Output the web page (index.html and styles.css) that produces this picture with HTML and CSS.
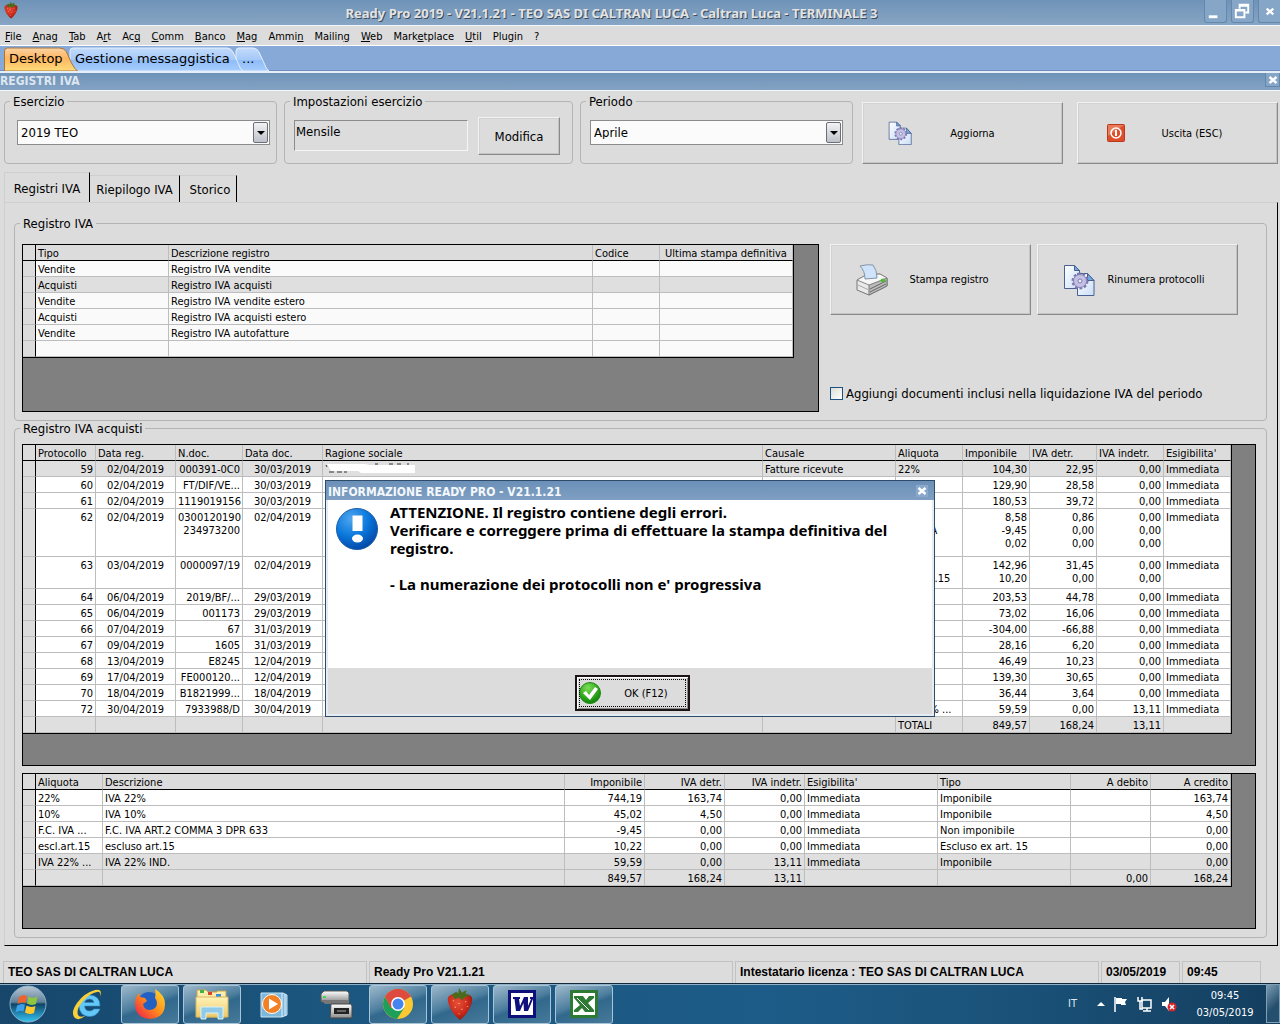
FILE: index.html
```html
<!DOCTYPE html>
<html lang="it">
<head>
<meta charset="utf-8">
<title>Ready Pro 2019 - Registri IVA</title>
<link rel="stylesheet" href="styles.css">
</head>
<body>
<svg class="defs" width="0" height="0" aria-hidden="true">
  <defs>
    <linearGradient id="paper" x1="0" y1="0" x2="1" y2="1"><stop offset="0" stop-color="#fff"/><stop offset="1" stop-color="#c9def6"/></linearGradient>
    <radialGradient id="berry" cx=".4" cy=".35" r=".7"><stop offset="0" stop-color="#e8503a"/><stop offset=".6" stop-color="#c92a1c"/><stop offset="1" stop-color="#8c160f"/></radialGradient>
    <radialGradient id="blueball" cx=".35" cy=".25" r=".85"><stop offset="0" stop-color="#4fa6ee"/><stop offset=".5" stop-color="#0a78dc"/><stop offset="1" stop-color="#023f9c"/></radialGradient>
    <radialGradient id="greenball" cx=".4" cy=".25" r=".8"><stop offset="0" stop-color="#7ddc5a"/><stop offset=".6" stop-color="#2fa81c"/><stop offset="1" stop-color="#0c7a08"/></radialGradient>
    <linearGradient id="orb" x1="0" y1="0" x2="0" y2="1"><stop offset="0" stop-color="#b9c9d6"/><stop offset=".45" stop-color="#5f8099"/><stop offset=".5" stop-color="#0f4468"/><stop offset="1" stop-color="#35c4f2"/></linearGradient>
    <linearGradient id="fox" x1="1" y1="0" x2="0" y2="1"><stop offset="0" stop-color="#ffe22e"/><stop offset=".5" stop-color="#ff8a1c"/><stop offset="1" stop-color="#ee1350"/></linearGradient>
    <linearGradient id="folder" x1="0" y1="0" x2="0" y2="1"><stop offset="0" stop-color="#fff3b8"/><stop offset="1" stop-color="#ecc96a"/></linearGradient>
    <linearGradient id="metal" x1="0" y1="0" x2="0" y2="1"><stop offset="0" stop-color="#fff"/><stop offset="1" stop-color="#8d8d8d"/></linearGradient>
  </defs>
  <symbol id="i-docs" viewBox="0 0 32 32">
    <path d="M1.500 1.500h10l5 5v18h-15z" fill="url(#paper)" stroke="#4a5f92"/>
    <path d="M11.500 1.500v5h5z" fill="#6fa8dc" stroke="#4a5f92"/>
    <path d="M14.500 9.500h10l6.500 7v15h-16.500z" fill="url(#paper)" stroke="#4a5f92"/>
    <path d="M24.500 9.500v7h6.500z" fill="#6fa8dc" stroke="#4a5f92"/>
    <circle cx="17" cy="17" r="7" fill="none" stroke="#7d78b0" stroke-width="3" stroke-dasharray="2.600 1.800"/>
    <circle cx="17" cy="17" r="6.500" fill="#c4c0e2" stroke="#8580b8"/>
    <circle cx="17" cy="17" r="2" fill="#eef" stroke="#7d78b0"/>
  </symbol>
  <symbol id="i-berry" viewBox="0 0 32 36">
    <path d="M16 35C9 30 3 20 3 13c0-5 5-6 13-6s13 1 13 6c0 7-6 17-13 22z" fill="url(#berry)"/>
    <path d="M7 8l5-3 2 2 1-6 3 5 5-3-1 4 5 2-6 2-3 3-3-3-4 2z" fill="#4c6a1c"/>
    <path d="M9 14v1M15 17v1M22 15v1M11 21v1M18 23v1M24 20v1M15 28v1" stroke="#ffb36b" stroke-width="1.500"/>
  </symbol>
  <symbol id="i-x" viewBox="0 0 10 10"><path d="M1.500 2l7 6M8.500 2l-7 6" stroke="#fff" stroke-width="2.400"/></symbol>
</svg>

<header class="titlebar">
  <svg class="app-icon" viewBox="0 0 32 36"><use href="#i-berry"/></svg>
  <h1>Ready Pro 2019 - V21.1.21 - TEO SAS DI CALTRAN LUCA - Caltran Luca - TERMINALE 3</h1>
  <div class="winbtns">
    <button type="button" aria-label="Riduci"><svg viewBox="0 0 22 22"><path d="M4 15h9v3H4z" fill="#fff"/></svg></button>
    <button type="button" aria-label="Ripristina"><svg viewBox="0 0 22 22"><path d="M8 8V4h9v8h-3M8 5h9" fill="none" stroke="#fff" stroke-width="2"/><path d="M4 9.500h9V17H4zM4 10h9" fill="none" stroke="#fff" stroke-width="2"/></svg></button>
    <button type="button" aria-label="Chiudi"><svg viewBox="0 0 22 22"><path d="M8 8l7 6M15 8l-7 6" stroke="#fff" stroke-width="2.400"/></svg></button>
  </div>
</header>

<nav class="menu">
  <a href="#"><u>F</u>ile</a><a href="#"><u>A</u>nag</a><a href="#"><u>T</u>ab</a><a href="#">A<u>r</u>t</a><a href="#">Ac<u>q</u></a><a href="#"><u>C</u>omm</a><a href="#"><u>B</u>anco</a><a href="#"><u>M</u>ag</a><a href="#">Ammi<u>n</u></a><a href="#">Mailin<u>g</u></a><a href="#"><u>W</u>eb</a><a href="#">Mark<u>e</u>tplace</a><a href="#"><u>U</u>til</a><a href="#">Plugin</a><a href="#">?</a>
</nav>

<nav class="doctabs">
  <svg class="tabshapes" width="280" height="24" aria-hidden="true">
    <defs>
      <linearGradient id="tb" x1="0" y1="0" x2="0" y2="1"><stop offset="0" stop-color="#c3dbfb"/><stop offset=".5" stop-color="#a5c9f8"/><stop offset=".55" stop-color="#8fbcf8"/><stop offset="1" stop-color="#a6cdfd"/></linearGradient>
      <linearGradient id="to" x1="0" y1="0" x2="0" y2="1"><stop offset="0" stop-color="#fbd3a4"/><stop offset=".45" stop-color="#fdb55f"/><stop offset="1" stop-color="#ffdc7a"/></linearGradient>
    </defs>
    <path d="M236 24V4q0-3 3-3h14q4 0 6 4l5 11q2 6 5 8z" fill="url(#tb)" stroke="#e4effc"/>
    <path d="M70 24V4q0-3 3-3h154q4 0 6 4l5 11q2 6 5 8z" fill="url(#tb)" stroke="#e4effc"/>
    <path d="M4.500 24V4q0-3 3-3h52q5 0 7 4l5 11q3 6 6 8z" fill="url(#to)" stroke="#a8763c"/>
  </svg>
  <a href="#" class="tab-a">Desktop</a><a href="#" class="tab-b">Gestione messaggistica</a><a href="#">...</a>
</nav>

<div class="section-title"><h2>REGISTRI IVA</h2><button type="button" aria-label="Chiudi scheda"><svg viewBox="0 0 10 10"><use href="#i-x"/></svg></button></div>

<main>
  <form class="toolbar">
    <fieldset class="group g-year">
      <legend>Esercizio</legend>
      <div class="combo"><select aria-label="Esercizio"><option>2019 TEO</option></select><span class="arrow"></span></div>
    </fieldset>
    <fieldset class="group g-settings">
      <legend>Impostazioni esercizio</legend>
      <div class="settings"><input type="text" value="Mensile" readonly aria-label="Impostazioni esercizio"><button type="button" class="btn">Modifica</button></div>
    </fieldset>
    <fieldset class="group g-period">
      <legend>Periodo</legend>
      <div class="combo"><select aria-label="Periodo"><option>Aprile</option></select><span class="arrow"></span></div>
    </fieldset>
    <button type="button" class="btn big refresh"><svg class="ico24" viewBox="0 0 32 32"><use href="#i-docs"/></svg><span>Aggiorna</span></button>
    <button type="button" class="btn big exit"><svg class="ico18" viewBox="0 0 18 18"><rect x=".5" y=".5" width="17" height="17" rx="1" fill="#dc4f2a" stroke="#b9391c"/><path d="M1 1h16L1 12z" fill="#f0997c" opacity=".6"/><circle cx="9" cy="9" r="5" fill="none" stroke="#fff" stroke-width="1.500"/><path d="M9 6v6" stroke="#fff" stroke-width="2"/></svg><span>Uscita (ESC)</span></button>
  </form>

  <div class="tabs" role="tablist">
    <button type="button" role="tab" aria-selected="true">Registri IVA</button><button type="button" role="tab">Riepilogo IVA</button><button type="button" role="tab">Storico</button>
  </div>

  <section class="panel">
    <fieldset class="group registers">
      <legend>Registro IVA</legend>
      <div class="reg-row">
        <div class="grid reg-grid">
          <table class="t-reg ruled">
            <colgroup><col class="w13"><col class="w133"><col><col class="w67"><col class="w133"></colgroup>
            <thead><tr><th></th><th>Tipo</th><th>Descrizione registro</th><th>Codice</th><th class="c">Ultima stampa definitiva</th></tr></thead>
            <tbody>
              <tr><th></th><td>Vendite</td><td>Registro IVA vendite</td><td></td><td></td></tr>
              <tr class="sel"><th></th><td>Acquisti</td><td>Registro IVA acquisti</td><td></td><td></td></tr>
              <tr><th></th><td>Vendite</td><td>Registro IVA vendite estero</td><td></td><td></td></tr>
              <tr><th></th><td>Acquisti</td><td>Registro IVA acquisti estero</td><td></td><td></td></tr>
              <tr><th></th><td>Vendite</td><td>Registro IVA autofatture</td><td></td><td></td></tr>
              <tr><th></th><td></td><td></td><td></td><td></td></tr>
            </tbody>
          </table>
        </div>
        <div class="actions">
          <div class="action-btns">
            <button type="button" class="btn big"><svg class="ico32" viewBox="0 0 32 32"><path d="M1 16l9-5 14-1 7 4v8l-18 9-12-5z" fill="#e9e9e9" stroke="#777"/><path d="M13 21v10l18-9v-8z" fill="#bcbcbc" stroke="#777"/><path d="M14 25l16-8M14 28l16-8" stroke="#666"/><path d="M2 21l11 5" stroke="#aaa"/><path d="M1 16l9-5 14-1 7 4-18 7z" fill="#f6f6f6" stroke="#888"/><path d="M4 2q8-2 13-1 4 5 4 13l-12 1q0-8-5-13z" fill="#cfe3fa" stroke="#8394a8"/><ellipse cx="27" cy="16.500" rx="2.500" ry="2" fill="#58b83c"/></svg><span>Stampa registro</span></button>
            <button type="button" class="btn big"><svg class="ico32" viewBox="0 0 32 32"><use href="#i-docs"/></svg><span>Rinumera protocolli</span></button>
          </div>
          <label class="check"><input type="checkbox">Aggiungi documenti inclusi nella liquidazione IVA del periodo</label>
        </div>
      </div>
    </fieldset>

    <fieldset class="group entries">
      <legend>Registro IVA acquisti</legend>
      <div class="grid entries-grid">
        <table class="t-ent ruled">
          <colgroup><col class="w13"><col class="w60"><col class="w80"><col class="w67"><col class="w80"><col><col class="w133"><col class="w67"><col class="w67"><col class="w67"><col class="w67"><col class="w67"></colgroup>
          <thead><tr><th></th><th>Protocollo</th><th>Data reg.</th><th>N.doc.</th><th>Data doc.</th><th>Ragione sociale</th><th>Causale</th><th>Aliquota</th><th>Imponibile</th><th>IVA detr.</th><th>IVA indetr.</th><th>Esigibilita'</th></tr></thead>
          <tbody>
            <tr class="sel"><th></th><td>59</td><td>02/04/2019</td><td>000391-0C0</td><td>30/03/2019</td><td><svg class="redacted" width="92" height="11" viewBox="0 0 92 11"><path d="M2 1h38l4 1h46v8H36l-3-2H6L4 4z" fill="#fff"/><path d="M1 2l1 2M4 9h5M12 9h5M19 9h3M50 1h3M64 1h4M72 1h4M82 1h2" stroke="#333" fill="none"/></svg></td><td>Fatture ricevute</td><td>22%</td><td>104,30</td><td>22,95</td><td>0,00</td><td>Immediata</td></tr>
            <tr><th></th><td>60</td><td>02/04/2019</td><td>FT/DIF/VE...</td><td>30/03/2019</td><td></td><td></td><td>22%</td><td>129,90</td><td>28,58</td><td>0,00</td><td>Immediata</td></tr>
            <tr><th></th><td>61</td><td>02/04/2019</td><td>1119019156</td><td>30/03/2019</td><td></td><td></td><td>22%</td><td>180,53</td><td>39,72</td><td>0,00</td><td>Immediata</td></tr>
            <tr class="h3"><th></th><td>62</td><td>02/04/2019</td><td>0300120190<br>234973200</td><td>02/04/2019</td><td></td><td></td><td>10%<br>F.C. &nbsp;IVA</td><td>8,58<br>-9,45<br>0,02</td><td>0,86<br>0,00<br>0,00</td><td>0,00<br>0,00<br>0,00</td><td>Immediata</td></tr>
            <tr class="h2"><th></th><td>63</td><td>03/04/2019</td><td>0000097/19</td><td>02/04/2019</td><td></td><td></td><td>22%<br>escl.art.15</td><td>142,96<br>10,20</td><td>31,45<br>0,00</td><td>0,00<br>0,00</td><td>Immediata</td></tr>
            <tr><th></th><td>64</td><td>06/04/2019</td><td>2019/BF/...</td><td>29/03/2019</td><td></td><td></td><td>22%</td><td>203,53</td><td>44,78</td><td>0,00</td><td>Immediata</td></tr>
            <tr><th></th><td>65</td><td>06/04/2019</td><td>001173</td><td>29/03/2019</td><td></td><td></td><td>22%</td><td>73,02</td><td>16,06</td><td>0,00</td><td>Immediata</td></tr>
            <tr><th></th><td>66</td><td>07/04/2019</td><td>67</td><td>31/03/2019</td><td></td><td></td><td>22%</td><td>-304,00</td><td>-66,88</td><td>0,00</td><td>Immediata</td></tr>
            <tr><th></th><td>67</td><td>09/04/2019</td><td>1605</td><td>31/03/2019</td><td></td><td></td><td>22%</td><td>28,16</td><td>6,20</td><td>0,00</td><td>Immediata</td></tr>
            <tr><th></th><td>68</td><td>13/04/2019</td><td>E8245</td><td>12/04/2019</td><td></td><td></td><td>22%</td><td>46,49</td><td>10,23</td><td>0,00</td><td>Immediata</td></tr>
            <tr><th></th><td>69</td><td>17/04/2019</td><td>FE000120...</td><td>12/04/2019</td><td></td><td></td><td>22%</td><td>139,30</td><td>30,65</td><td>0,00</td><td>Immediata</td></tr>
            <tr><th></th><td>70</td><td>18/04/2019</td><td>B1821999...</td><td>18/04/2019</td><td></td><td></td><td>10%</td><td>36,44</td><td>3,64</td><td>0,00</td><td>Immediata</td></tr>
            <tr><th></th><td>72</td><td>30/04/2019</td><td>7933988/D</td><td>30/04/2019</td><td></td><td></td><td>IVA 22% ...</td><td>59,59</td><td>0,00</td><td>13,11</td><td>Immediata</td></tr>
            <tr class="tot"><th></th><td></td><td></td><td></td><td></td><td></td><td></td><td>TOTALI</td><td>849,57</td><td>168,24</td><td>13,11</td><td></td></tr>
          </tbody>
        </table>
      </div>
      <div class="grid totals-grid">
        <table class="t-sum ruled">
          <colgroup><col class="w13"><col class="w67"><col><col class="w80"><col class="w80"><col class="w80"><col class="w133"><col class="w133"><col class="w80"><col class="w80"></colgroup>
          <thead><tr><th></th><th>Aliquota</th><th>Descrizione</th><th>Imponibile</th><th>IVA detr.</th><th>IVA indetr.</th><th>Esigibilita'</th><th>Tipo</th><th>A debito</th><th>A credito</th></tr></thead>
          <tbody>
            <tr><th></th><td>22%</td><td>IVA 22%</td><td>744,19</td><td>163,74</td><td>0,00</td><td>Immediata</td><td>Imponibile</td><td></td><td>163,74</td></tr>
            <tr><th></th><td>10%</td><td>IVA 10%</td><td>45,02</td><td>4,50</td><td>0,00</td><td>Immediata</td><td>Imponibile</td><td></td><td>4,50</td></tr>
            <tr><th></th><td>F.C. IVA ...</td><td>F.C. IVA ART.2 COMMA 3 DPR 633</td><td>-9,45</td><td>0,00</td><td>0,00</td><td>Immediata</td><td>Non imponibile</td><td></td><td>0,00</td></tr>
            <tr><th></th><td>escl.art.15</td><td>escluso art.15</td><td>10,22</td><td>0,00</td><td>0,00</td><td>Immediata</td><td>Escluso ex art. 15</td><td></td><td>0,00</td></tr>
            <tr class="sel"><th></th><td>IVA 22% ...</td><td>IVA 22% IND.</td><td>59,59</td><td>0,00</td><td>13,11</td><td>Immediata</td><td>Imponibile</td><td></td><td>0,00</td></tr>
            <tr class="tot"><th></th><td></td><td></td><td>849,57</td><td>168,24</td><td>13,11</td><td></td><td></td><td>0,00</td><td>168,24</td></tr>
          </tbody>
        </table>
      </div>
    </fieldset>
  </section>
</main>

<footer class="status"><span>TEO SAS DI CALTRAN LUCA</span><span>Ready Pro V21.1.21</span><span>Intestatario licenza : TEO SAS DI CALTRAN LUCA</span><span class="short">03/05/2019</span><span class="short">09:45</span></footer>

<div class="taskbar">
  <button type="button" class="start" aria-label="Start"><svg width="38" height="38" viewBox="0 0 38 38"><circle cx="19" cy="19" r="18" fill="url(#orb)" stroke="#8fb2c8"/><path d="M10 12q4-3 8-1l-1.500 7q-4-2-8 1z" fill="#f0622c"/><path d="M19.500 11.500q4 2.500 9 0l-1.500 7.500q-5 2-9-.5z" fill="#8fc640"/><path d="M8 20.500q4-2.500 8-1l-1.500 7q-4-2-8 1z" fill="#3ba0e8"/><path d="M17.500 20.500q4 2.500 9 .500l-1.500 7q-5 2-9-.5z" fill="#fcc82c"/></svg></button>
  <button type="button" class="task" aria-label="Internet Explorer"><svg width="34" height="34" viewBox="0 0 34 34"><path d="M29 19H13.500q.5 5 5 5 3 0 4.500-2h6q-3 7.500-10.500 7.500-10-.5-10.500-10.500.5-10.500 10.500-11 10.500.5 10.500 11zM13.500 15.500H23Q22.500 12 18.500 12t-5 3.500z" fill="#63c8f6" stroke="#2c8fd0" stroke-width=".6"/><path d="M29 10q3-9-5-7Q13 6 6 16T4 31q4 3 10-2-5.500 2-7-1Q5 22 12 14T26 5q4-1 3 5z" fill="#f7cf3a"/></svg></button>
  <button type="button" class="task open" aria-label="Firefox"><svg width="32" height="32" viewBox="0 0 32 32"><circle cx="15" cy="15" r="11" fill="#2360c4"/><path d="M21 1q10 6 10 15 0 14-15 15Q1 30 1 16q0-7 4-11l1 4 5 1 2 3-4 3q1 6 7 6 7-1 7-7 0-3-2-5 1-5 0-9z" fill="url(#fox)"/></svg></button>
  <button type="button" class="task open" aria-label="Esplora risorse"><svg width="34" height="32" viewBox="0 0 34 32"><path d="M2 5V2h9l2 2h9V3h9v26H2z" fill="url(#folder)" stroke="#c8a24a"/><path d="M5 2h4v3H5z" fill="#3cb44a"/><path d="M13 4h4v3h-4z" fill="#d8452c"/><path d="M21 6h5v3h-5z" fill="#3d8be0"/><path d="M1 9h32v20H1z" fill="url(#folder)" stroke="#d8b65c"/><path d="M6 31V19h22v12h-5v-6H11v6z" fill="#8fcbe8" stroke="#d8f2fc"/></svg></button>
  <button type="button" class="task" aria-label="Media Player"><svg width="30" height="30" viewBox="0 0 30 30"><path d="M2 4h22l4 2v20l-5 2H2z" fill="#7db8dc" stroke="#c8e4f4"/><path d="M23 4v24M26 5v22" stroke="#e0f2fc"/><circle cx="13" cy="15" r="9.500" fill="#f28024" stroke="#fff"/><path d="M10 9.500v11l9-5.500z" fill="#fff"/></svg></button>
  <button type="button" class="task" aria-label="Dispositivo"><svg width="34" height="32" viewBox="0 0 34 32"><path d="M5 3h23l2 2v9H2V6z" fill="url(#metal)" stroke="#555"/><path d="M2 12h28v4H6z" fill="#777"/><path d="M4 9h3" stroke="#3ddc4a" stroke-width="2"/><path d="M12 16h20l1 2v12H11z" fill="url(#metal)" stroke="#444"/><path d="M15 20h15v6H15z" fill="#222"/><path d="M18 23h9" stroke="#aaa"/></svg></button>
  <button type="button" class="task open" aria-label="Chrome"><svg width="32" height="32" viewBox="0 0 32 32"><circle cx="16" cy="16" r="15" fill="#fbc831"/><path d="M16 16L3 8.500Q8 1 16 1t13 7.500z" fill="#dd4b3e"/><path d="M3 8.500Q-1 16 3 23.500 8 30.500 15 31l7.500-11.500L9.500 20z" fill="#1ea05a"/><path d="M29 8.500H16L9 20 3 8.500Q8 1 16 1t13 7.500z" fill="#dd4b3e"/><circle cx="16" cy="16" r="7" fill="#fff"/><circle cx="16" cy="16" r="5.500" fill="#4585f0"/></svg></button>
  <button type="button" class="task open" aria-label="Ready Pro"><svg width="30" height="34" viewBox="0 0 32 36"><use href="#i-berry"/></svg></button>
  <button type="button" class="task open" aria-label="Word"><svg width="28" height="28" viewBox="0 0 28 28"><path d="M0 0h28v28H0z" fill="#10107c"/><path d="M3 3h22v22H3z" fill="#fff"/><path d="M5 7h7v2h-1l1 7 4-9h4l0 9 3-7h-1V7h3v2L20 21h-4l-.500-8L12 21H8L6.500 9H5z" fill="#10107c"/></svg></button>
  <button type="button" class="task open" aria-label="Excel"><svg width="28" height="28" viewBox="0 0 28 28"><path d="M0 0h28v28H0z" fill="#2c7a34"/><path d="M3 3h22v22H3z" fill="#fff"/><path d="M4 6h9l3 4 3-4h5v2l-6 5 6 7v2h-9l-3-4-4 4H4v-2l6-5-6-7z" fill="#2c7a34"/><path d="M7 8l12 12" stroke="#fff"/></svg></button>
  <div class="tray">
    <span class="lang">IT</span>
    <svg width="8" height="5" viewBox="0 0 8 5"><path d="M0 5l4-4 4 4z" fill="#fff"/></svg>
    <svg width="16" height="16" viewBox="0 0 16 16"><path d="M2 1v15" stroke="#fff" stroke-width="1.500"/><path d="M3 2h6v1h5l-2 3 1 3H8V8H3z" fill="#fff"/></svg>
    <svg width="16" height="16" viewBox="0 0 16 16"><path d="M5 4h9v8H5zM6 15h8M10 12v3" fill="none" stroke="#fff" stroke-width="1.500"/><path d="M1 1v4h4V1M3 5v8h3" fill="none" stroke="#fff" stroke-width="1.500"/></svg>
    <svg width="16" height="16" viewBox="0 0 16 16"><path d="M1 6h3l4-5v14l-4-5H1z" fill="#fff"/><circle cx="11" cy="11" r="4.500" fill="#d8252c"/><path d="M9 9l4 4M13 9l-4 4" stroke="#fff" stroke-width="1.500"/></svg>
    <div class="clock"><span>09:45</span><span>03/05/2019</span></div>
    <button type="button" class="show-desktop" aria-label="Mostra desktop"></button>
  </div>
</div>

<div class="dialog" role="dialog" aria-labelledby="dlg-title">
  <div class="dlg-head"><h3 id="dlg-title">INFORMAZIONE READY PRO - V21.1.21</h3><button type="button" aria-label="Chiudi"><svg viewBox="0 0 10 10"><use href="#i-x"/></svg></button></div>
  <div class="dlg-body">
    <svg width="44" height="44" viewBox="0 0 44 44"><circle cx="22" cy="22" r="20.500" fill="url(#blueball)" stroke="#1a5fae"/><path d="M17.500 8.500h10V24h-10z" fill="#fff"/><ellipse cx="22.500" cy="31.500" rx="5.500" ry="4" fill="#fff"/></svg>
    <div class="msg"><p>ATTENZIONE. Il registro contiene degli errori.<br>Verificare e correggere prima di effettuare la stampa definitiva del<br>registro.</p><p>- La numerazione dei protocolli non e' progressiva</p></div>
  </div>
  <div class="dlg-foot"><button type="button" class="ok"><svg width="22" height="22" viewBox="0 0 22 22"><circle cx="11" cy="11" r="10.500" fill="url(#greenball)" stroke="#1c8a14"/><path d="M4 11l3-2 3 4 6-8 3 2-8 11z" fill="#fff"/></svg><span>OK (F12)</span></button></div>
</div>
</body>
</html>
```
FILE: styles.css
```css
:root {
  --face: #dcdcdc;
  --line: #b4b4b4;
  --ui: "DejaVu Sans Condensed", "DejaVu Sans", sans-serif;
}
* { box-sizing: border-box; }
body {
  margin: 0;
  min-height: 100vh;
  display: flex;
  flex-direction: column;
  position: relative;
  background: var(--face);
  color: #000;
  font: 11px/13px var(--ui);
}
h1, h2, h3, p { margin: 0; }
button, select, input { font: inherit; color: inherit; padding: 0; margin: 0; }
button { border: 0; background: none; }
a { color: inherit; text-decoration: none; }
.defs { position: absolute; }

/* window title */
.titlebar {
  display: flex;
  align-items: center;
  height: 26px;
  border-bottom: 1px solid #f4f7fa;
  background: linear-gradient(#6f93b8, #87a5c4);
}
.app-icon { width: 16px; height: 18px; margin: 0 0 5px 3px; }
.titlebar h1 {
  flex: 1;
  text-align: center;
  font: bold 13px/20px "Noto Sans", sans-serif;
  color: #e3e3e3;
  text-shadow: 1px 1px 0 #3c4c5c;
}
.winbtns { display: flex; gap: 4px; align-self: flex-start; margin-right: -1px; }
.winbtns button {
  width: 23px; height: 23px;
  border: 1px solid #6487ac; border-top: 0;
  border-radius: 0 0 3px 3px;
  background: #86a6c8;
}
.winbtns button:last-child { border-right: 0; border-bottom-right-radius: 0; }
.winbtns svg { display: block; width: 21px; height: 21px; }

.menu {
  display: flex;
  gap: 11px;
  height: 20px;
  padding: 4px 5px 0;
  border-bottom: 1px solid #fff;
}
.menu a { white-space: nowrap; }

.doctabs {
  position: relative;
  display: flex;
  height: 27px;
  padding-left: 9px;
  background: #87a9d7;
  border-bottom: 2px solid #e6eefa;
  box-shadow: inset 0 -1px 0 #6e8fc0;
  font: 13px/26px "DejaVu Sans", sans-serif;
}
.doctabs a { position: relative; }
.tabshapes { position: absolute; left: 0; bottom: 0; }
.tab-a { width: 66px; }
.tab-b { width: 167px; }

.section-title {
  display: flex;
  justify-content: space-between;
  height: 18px;
  border-bottom: 1px solid #f4f7fa;
  background: linear-gradient(#6f93b8, #84a3c4);
}
.section-title h2 { font: bold 12px/16px var(--ui); color: #dde6ef; }
.section-title button { width: 15px; height: 14px; background: #86a6c8; border: 1px solid #6487ac; border-top: 0; }
.section-title svg { display: block; width: 10px; height: 10px; margin: 1px auto; }

main { flex: 1; padding: 3px 2px 15px 4px; }

/* group boxes */
.group {
  min-width: 0;
  margin: 0;
  padding: 0;
  border: 1px solid var(--line);
  border-radius: 4px;
  font-size: 13px;
}
.group legend { margin-left: 5px; padding: 0 3px; line-height: 15px; }

.toolbar {
  display: grid;
  grid-template-columns: 273fr 7px 289fr 7px 273fr 9px 201fr 14px 201fr;
  align-items: start;
}
.toolbar .group { height: 70px; }
.g-year { grid-column: 1; }
.g-settings { grid-column: 3; }
.g-period { grid-column: 5; }
.refresh { grid-column: 7; }
.exit { grid-column: 9; }
.g-year .combo { margin: 11px 6px 0 12px; }
.g-period .combo { margin: 11px 9px 0 9px; }
.combo { position: relative; height: 25px; }
.combo select {
  appearance: none;
  display: block;
  width: 100%;
  height: 25px;
  padding-left: 3px;
  border: 1px solid #8c8c8c;
  border-radius: 0;
  background: #fbfbfb;
}
.arrow {
  position: absolute;
  top: 2px; right: 2px;
  width: 15px; height: 21px;
  border: 1px solid #6c6f78;
  border-radius: 2px;
  background: linear-gradient(#f2f2f4, #bfc2ca);
  pointer-events: none;
}
.arrow::after {
  content: "";
  display: block;
  margin: 8px auto 0;
  width: 0;
  border: 4px solid transparent;
  border-top-color: #000;
  border-bottom: 0;
}
.settings { display: flex; align-items: flex-start; gap: 10px; padding: 8px 12px 0 9px; }
.settings input {
  flex: 1;
  min-width: 0;
  height: 31px;
  margin-top: 3px;
  padding: 0 0 9px 1px;
  border: 1px solid;
  border-color: #8c8c8c #f6f6f6 #f6f6f6 #8c8c8c;
  background: transparent;
}
.settings .btn { width: 82px; height: 38px; }

.btn {
  border: 1px solid;
  border-color: #f2f2f2 #8a8a8a #8a8a8a #f2f2f2;
  box-shadow: inset -1px -1px 0 #c4c4c4, inset 1px 1px 0 #d2d2d2;
  background: var(--face);
}
.big { display: flex; align-items: center; font-size: 11px; }
.big span { flex: 1; text-align: center; }
.refresh, .exit { height: 62px; margin-top: 8px; }
.refresh { padding: 0 59px 0 25px; }
.exit { padding: 0 36px 0 29px; }
.refresh span { padding-left: 30px; }
.exit span { padding-left: 18px; }
.ico18 { width: 18px; height: 18px; }
.ico24 { width: 24px; height: 24px; }
.ico32 { width: 32px; height: 32px; }

/* page tabs */
.tabs { display: flex; align-items: flex-end; margin-top: 8px; font-size: 13px; }
.tabs button {
  width: 90px;
  height: 27px;
  border: 1px solid #cfcfcf;
  border-width: 1px 1px 0 0;
  border-right: 1px solid #000;
  white-space: nowrap;
}
.tabs button:first-child { width: 86px; height: 30px; padding-top: 2px; border-left-width: 1px; }
.tabs button:last-child { width: 57px; padding-left: 4px; }

.panel {
  padding: 13px 10px 7px 9px;
  border: 1px solid;
  border-color: #cfcfcf #000 #000 #cfcfcf;
}

/* data grids */
.grid { border: 1px solid #000; background: #808080; font-size: 11px; }
.ruled {
  width: 100%;
  table-layout: fixed;
  border-collapse: separate;
  border-spacing: 0;
  border-right: 1px solid #000;
  border-bottom: 1px solid #000;
  background: #fff;
}
.t-reg { background: #fafafa; }
.ruled th, .ruled td {
  height: 16px;
  padding: 2px 2px 0;
  border-right: 1px solid #bdbdbd;
  border-bottom: 1px solid #bdbdbd;
  vertical-align: top;
  text-align: left;
  font-weight: normal;
  line-height: 13px;
  white-space: nowrap;
  overflow: hidden;
}
.ruled th { background: var(--face); }
.ruled thead th { border-bottom-color: #000; }
.ruled th:first-child { border-right-color: #000; }
.ruled .sel td, .ruled .tot td { background: #dfdfdf; }
.ruled .h3 td { height: 48px; }
.ruled .h2 td { height: 32px; }
.ruled .c { text-align: center; }
.w13 { width: 13px; }
.w60 { width: 60px; }
.w67 { width: 67px; }
.w80 { width: 80px; }
.w133 { width: 133px; }

.t-ent td:nth-child(2), .t-ent td:nth-child(4),
.t-ent td:nth-child(9), .t-ent td:nth-child(10), .t-ent td:nth-child(11),
.t-sum :is(td, th):nth-child(4), .t-sum :is(td, th):nth-child(5), .t-sum :is(td, th):nth-child(6),
.t-sum :is(td, th):nth-child(9), .t-sum :is(td, th):nth-child(10) { text-align: right; }
.t-ent td:nth-child(3), .t-ent td:nth-child(5) { text-align: center; }
.redacted { display: block; }

.group.registers { padding: 13px 28px 8px 7px; }
.group.entries { padding: 8px 10px 8px 7px; }
.panel legend { margin-left: -2px; }
.reg-row { display: flex; gap: 11px; }
.reg-grid { flex: 1; min-width: 0; height: 168px; padding-right: 24px; }
.actions { display: flex; flex-direction: column; justify-content: space-between; width: 408px; }
.action-btns { display: flex; gap: 6px; }
.action-btns .btn { flex: 1; height: 71px; padding: 0 32px 0 25px; }
.action-btns span { padding-left: 12px; }
.check { display: flex; align-items: center; gap: 3px; padding-bottom: 12px; white-space: nowrap; }
.check input {
  appearance: none;
  width: 13px; height: 13px;
  border: 1px solid #1c5180;
  background: linear-gradient(135deg, #dcdcd7, #fff);
}

.entries-grid { min-height: 322px; padding-right: 23px; }
.totals-grid { min-height: 156px; margin-top: 7px; padding-right: 23px; }

/* status line */
.status { display: flex; gap: 2px; height: 22px; padding: 0 19px 0 3px; font: bold 12px/21px "Liberation Sans", Arial, sans-serif; }
.status span { flex: 1; padding-left: 4px; border: 1px solid #c2c2c2; border-bottom: 0; white-space: nowrap; }
.status .short { flex: none; width: 79px; }

/* taskbar */
.taskbar {
  display: flex;
  align-items: center;
  gap: 4px;
  height: 41px;
  border-top: 1px solid #10293c;
  background: linear-gradient(90deg, #17466a, #1b567f 25%, #1d5c88 60%, #1a5178 80%, #143e5e);
  box-shadow: inset 0 1px 0 #8fb0c6;
  color: #fff;
}
.start { width: 55px; height: 40px; }
.task { width: 58px; height: 39px; display: grid; place-items: center; }
.start svg { display: block; margin: 1px auto; }
.task.open {
  border: 1px solid #a9c4d6;
  border-radius: 3px;
  background: linear-gradient(160deg, #9db8cb, #4e7f9f 45%, #31688c 55%, #477a9a);
}
.tray { display: flex; align-items: center; gap: 8px; margin-left: auto; align-self: stretch; padding-bottom: 1px; }
.lang { margin-right: 12px; color: #dde6ee; }
.clock { display: flex; flex-direction: column; width: 66px; margin: 0 0 0 7px; text-align: center; line-height: 17px; }
.show-desktop { align-self: stretch; width: 14px; border: 1px solid #7fa0b6; background: linear-gradient(135deg, #7d9db3, #254f6e 60%); }

/* message box floating above the page */
.dialog {
  position: absolute;
  left: 325px;
  top: 480px;
  width: 610px;
  border: 1px solid #2f4b6a;
  background: #e4ebf3;
}
.dlg-head { display: flex; justify-content: space-between; height: 19px; padding: 1px 6px 0 2px; background: linear-gradient(#6b90b8, #7f9fc2); }
.dlg-head h3 { font: bold 12px/20px var(--ui); color: #f4f8fc; }
.dlg-head button { width: 12px; height: 12px; margin-top: 3px; background: #8aa9ca; }
.dlg-head svg { display: block; width: 10px; height: 10px; margin: 1px; }
.dlg-body { display: flex; gap: 11px; height: 168px; margin: 0 2px; padding: 3px 7px; background: #fff; }
.dlg-body > svg { margin-top: 4px; }
.msg { font: bold 15px/18px "Noto Sans", sans-serif; white-space: nowrap; }
.msg p + p { margin-top: 18px; }
.dlg-foot { display: flex; justify-content: center; height: 46px; margin: 0 2px 2px; padding: 7px 0 0 4px; background: var(--face); }
.ok {
  display: flex;
  align-items: center;
  width: 115px; height: 36px;
  padding: 0 14px 0 2px;
  border: 2px solid #1c1414;
  outline: 1px dotted #000;
  outline-offset: -5px;
  box-shadow: inset 1px 1px 0 #fff, inset -1px -1px 0 #8a8a8a;
}
.ok span { flex: 1; padding-left: 18px; text-align: center; white-space: nowrap; }
```
